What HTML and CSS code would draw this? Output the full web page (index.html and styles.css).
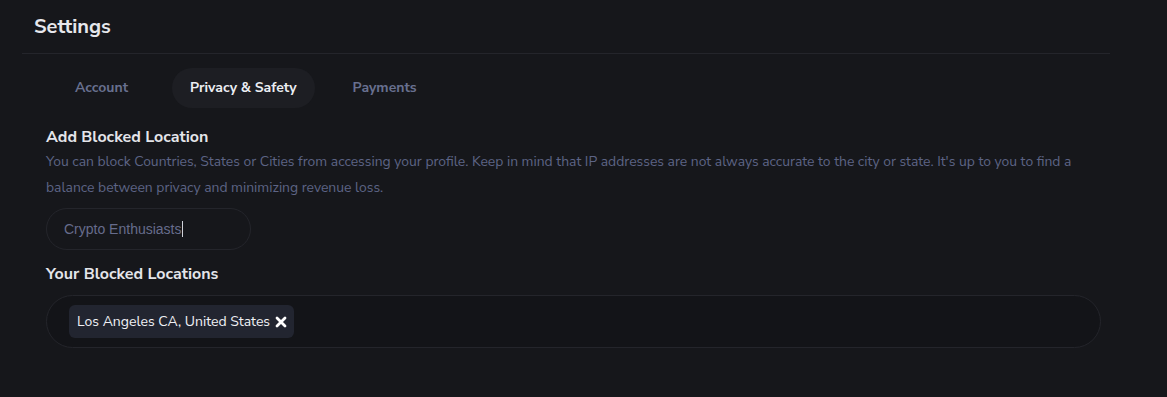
FILE: index.html
```html
<!DOCTYPE html>
<html lang="en">
<head>
<meta charset="utf-8">
<title>Settings</title>
<link rel="stylesheet" href="styles.css">
</head>
<body>
<div class="page">
  <header class="header">
    <h1 class="title">Settings</h1>
  </header>
  <div class="divider"></div>
  <nav class="tabs">
    <a class="tab">Account</a>
    <a class="tab active">Privacy &amp; Safety</a>
    <a class="tab">Payments</a>
  </nav>
  <section class="content">
    <h2 class="label">Add Blocked Location</h2>
    <p class="help">You can block Countries, States or Cities from accessing your profile. Keep in mind that IP addresses are not always accurate to the city or state. It's up to you to find a balance between privacy and minimizing revenue loss.</p>
    <div class="input"><span class="input-text">Crypto Enthusiasts</span><span class="caret"></span></div>
    <h2 class="label label-second">Your Blocked Locations</h2>
    <div class="chips-box">
      <span class="chip">Los Angeles CA, United States
        <svg class="chip-x" width="12" height="12" viewBox="0 0 12 12" aria-hidden="true"><path d="M2 2 L10 10 M10 2 L2 10" stroke="#ffffff" stroke-width="2.8" stroke-linecap="round"/></svg>
      </span>
    </div>
  </section>
</div>
</body>
</html>
```

FILE: styles.css
```css
* { box-sizing: border-box; }
html, body {
  margin: 0;
  padding: 0;
  background: #16171b;
  font-family: "Nunito Sans", Lato, "Noto Sans", sans-serif;
  color: #e8e9ee;
}
.page {
  width: 1167px;
  height: 397px;
  overflow: hidden;
}
.header {
  padding: 15px 34px 0 34px;
  height: 53px;
}
.title {
  margin: 0;
  font-size: 20px;
  font-weight: 700;
  line-height: 24px;
  color: #e6e7ec;
}
.divider {
  height: 1px;
  margin: 0 57px 0 22px;
  background: #24252b;
}
.tabs {
  display: flex;
  gap: 26px;
  margin-top: 14px;
  padding-left: 57px;
}
.tab {
  height: 40px;
  line-height: 40px;
  padding: 0 18px;
  border-radius: 20px;
  font-size: 14px;
  font-weight: 700;
  color: #68708f;
}
.tab.active {
  background: #1d1e23;
  color: #eceef3;
}
.tab:last-child {
  margin-left: -6px;
}
.content {
  padding: 19px 66px 0 46px;
}
.label {
  margin: 0;
  font-size: 16px;
  font-weight: 700;
  line-height: 20px;
  color: #e4e5ea;
}
.help {
  margin: 2px 0 0 0;
  font-size: 13.9px;
  line-height: 26px;
  color: #5d6485;
}
.input {
  display: flex;
  align-items: center;
  width: 205px;
  height: 42px;
  margin-top: 7px;
  padding-left: 17px;
  border: 1px solid #24252b;
  border-radius: 21px;
  font-family: "Liberation Sans", Arial, sans-serif;
  font-size: 14px;
  color: #666c8c;
}
.caret {
  width: 1px;
  height: 16px;
  background: #d0d2da;
}
.label-second {
  margin-top: 14px;
}
.chips-box {
  display: flex;
  align-items: center;
  height: 53px;
  margin-top: 11px;
  padding: 0 22px;
  border: 1px solid #24252b;
  border-radius: 27px;
  background: #131418;
}
.chip {
  display: inline-flex;
  align-items: center;
  gap: 5px;
  height: 33px;
  padding: 0 7px 0 8px;
  border-radius: 6px;
  background: #222530;
  font-size: 14px;
  color: #f0f1f5;
}
.chip-x { display: block; }
```
